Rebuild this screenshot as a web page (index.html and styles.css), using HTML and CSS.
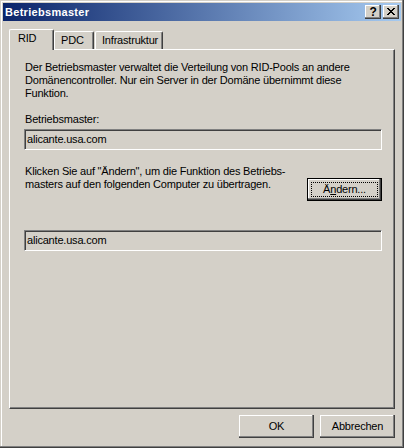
FILE: index.html
```html
<!DOCTYPE html>
<html>
<head>
    <title>Betriebsmaster</title>
<link rel="stylesheet" href="styles.css">
</head>
<body>
<div class="window">
    <div class="titlebar">
        <span class="title">Betriebsmaster</span>
        <span class="caption-btn help">?</span>
        <span class="caption-btn close">
            <svg width="8" height="7" viewBox="0 0 8 7" shape-rendering="crispEdges"><path d="M0 0h2v1H0z M6 0h2v1H6z M1 1h2v1H1z M5 1h2v1H5z M2 2h4v1H2z M3 3h2v1H3z M2 4h4v1H2z M1 5h2v1H1z M5 5h2v1H5z M0 6h2v1H0z M6 6h2v1H6z" fill="#000"/></svg>
        </span>
    </div>
    <div class="client">
        <div class="tabs">
            <div class="tab selected">RID</div>
            <div class="tab tab-pdc">PDC</div>
            <div class="tab tab-infra">Infrastruktur</div>
        </div>
        <div class="page">
            <p class="info">Der Betriebsmaster verwaltet die Verteilung von RID-Pools an andere<br>Domänencontroller. Nur ein Server in der Domäne übernimmt diese<br>Funktion.</p>
            <div class="label">Betriebsmaster:</div>
            <div class="field">alicante.usa.com</div>
            <div class="change-row">
                <p class="info">Klicken Sie auf "Ändern", um die Funktion des Betriebs-<br>masters auf den folgenden Computer zu übertragen.</p>
                <button class="btn default"><span class="focus">Ä<u>n</u>dern...</span></button>
            </div>
            <div class="field field-target">alicante.usa.com</div>
        </div>
        <div class="actions">
            <button class="btn">OK</button>
            <button class="btn">Abbrechen</button>
        </div>
    </div>
</div>
</body>
</html>
```

FILE: styles.css
```css
body {
  margin: 0;
  background-color: #d4d0c8;
  font-family: "Liberation Sans", Arial, sans-serif;
  font-size: 11px;
  letter-spacing: -0.2px;
  color: #000;
}
.window {
  width: 404px;
  height: 448px;
  box-sizing: border-box;
  padding: 3px;
  display: flex;
  flex-direction: column;
  background-color: #d4d0c8;
  box-shadow: inset -1px -1px 0 #404040, inset -2px -2px 0 #808080,
    inset 1px 1px 0 #d4d0c8, inset 2px 2px 0 #fff;
}
.titlebar {
  height: 18px;
  display: flex;
  align-items: center;
  background: linear-gradient(to right, #0a246a, #a6caf0);
}
.title {
  padding-left: 2px;
  color: #fff;
  font-weight: bold;
  letter-spacing: 0.3px;
}
.caption-btn {
  width: 16px;
  height: 14px;
  box-sizing: border-box;
  display: flex;
  align-items: center;
  justify-content: center;
  background-color: #d4d0c8;
  box-shadow: inset -1px -1px 0 #404040, inset -2px -2px 0 #808080,
    inset 1px 1px 0 #fff;
  font-weight: bold;
  font-size: 12px;
  line-height: 14px;
}
.help {
  margin-left: auto;
  padding-bottom: 1px;
}
.close {
  margin: 0 2px 0 2px;
  padding-bottom: 1px;
}
.client {
  flex: 1;
  display: flex;
  flex-direction: column;
  padding: 8px 6px 0 6px;
}
.tabs {
  height: 20px;
  display: flex;
  align-items: flex-end;
}
.tab {
  height: 18px;
  box-sizing: border-box;
  padding: 2px 0 0 6px;
  line-height: 13px;
  border-left: 1px solid #fff;
  border-top: 1px solid #fff;
  border-right: 1px solid #404040;
  border-radius: 2px 2px 0 0;
  box-shadow: inset -1px 0 0 #808080;
  background-color: #d4d0c8;
}
.selected {
  position: relative;
  z-index: 1;
  width: 45px;
  height: 21px;
  margin-bottom: -1px;
  padding-left: 8px;
}
.tab-pdc {
  width: 40px;
}
.tab-infra {
  width: 68px;
  margin-left: 1px;
}
.page {
  width: 386px;
  height: 360px;
  box-sizing: border-box;
  padding: 11px 12px 0 14px;
  border-left: 1px solid #fff;
  border-top: 1px solid #fff;
  border-right: 1px solid #404040;
  border-bottom: 1px solid #404040;
  box-shadow: inset -1px -1px 0 #808080;
}
.info {
  margin: 0;
  padding-left: 1px;
  line-height: 13px;
}
.label {
  margin-top: 13px;
  padding-left: 1px;
  line-height: 13px;
}
.field {
  margin-top: 3px;
  height: 21px;
  box-sizing: border-box;
  padding-left: 2px;
  line-height: 19px;
  border-top: 1px solid #808080;
  border-left: 1px solid #808080;
  border-bottom: 1px solid #fff;
  border-right: 1px solid #fff;
  box-shadow: inset 1px 1px 0 #404040, inset -1px -1px 0 #d4d0c8;
}
.change-row {
  margin-top: 15px;
  display: flex;
  justify-content: space-between;
  align-items: flex-start;
}
.field-target {
  margin-top: 29px;
}
.btn {
  width: 75px;
  height: 23px;
  box-sizing: border-box;
  padding: 0 0 1px 0;
  border: none;
  background-color: #d4d0c8;
  font: inherit;
  letter-spacing: inherit;
  color: #000;
  box-shadow: inset -1px -1px 0 #404040, inset -2px -2px 0 #808080,
    inset 1px 1px 0 #fff;
}
.default {
  margin-top: 13px;
  display: flex;
  padding: 3px;
  border: 1px solid #000;
}
.focus {
  flex: 1;
  border: 1px dotted #000;
  line-height: 13px;
  text-align: center;
}
.actions {
  margin-top: 6px;
  display: flex;
  justify-content: flex-end;
  gap: 6px;
}
```
